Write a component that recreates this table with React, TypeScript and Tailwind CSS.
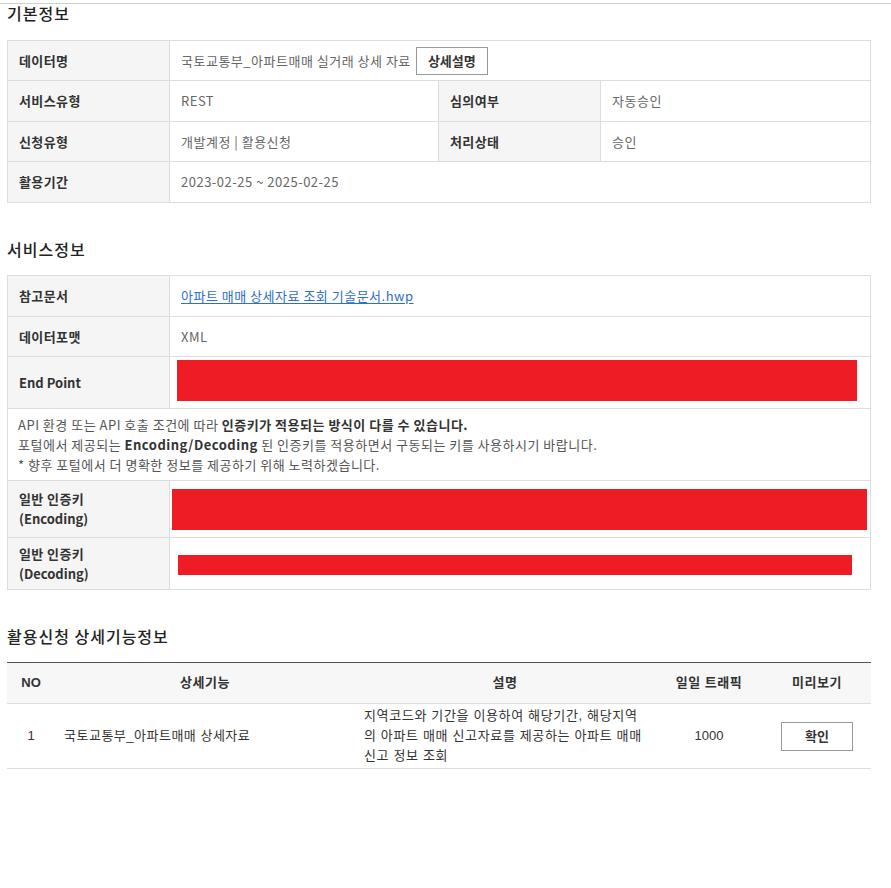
import React from "react";

const FONT = { fontFamily: '"Noto Sans CJK KR", "Noto Sans", sans-serif' };
const FONT3 = { fontFamily: '"Liberation Sans", "Noto Sans CJK KR", sans-serif' };

function Label({ children, w = "w-[162px]", extra = "" }: { children: React.ReactNode; w?: string; extra?: string }) {
  return (
    <div className={`${w} shrink-0 bg-[#f5f5f5] border-r border-[#ddd] flex items-center pl-[11px] text-[13px] font-bold text-[#333] leading-[20px] tracking-[0.4px] ${extra}`}>
      {children}
    </div>
  );
}

function Value({ children, w = "flex-1", extra = "" }: { children?: React.ReactNode; w?: string; extra?: string }) {
  return (
    <div className={`${w} flex items-center pl-[11px] text-[13px] text-[#666] tracking-[0.5px] ${extra}`}>{children}</div>
  );
}

function Title({ children, extra = "" }: { children: React.ReactNode; extra?: string }) {
  return (
    <div className={`pl-[7px] text-[16px] font-medium text-[#222] leading-[18px] tracking-[1px] ${extra}`}>{children}</div>
  );
}

export default function App() {
  return (
    <div className="w-[891px] h-[888px] bg-white" style={FONT}>
      <div className="h-[3px]" />
      <div className="h-px bg-[#cfcfcf]" />
      <Title>기본정보</Title>

      {/* Table 1 */}
      <div className="ml-[7px] mt-[18px] w-[864px] border border-[#ddd]">
        <div className="flex h-[40px] border-b border-[#ddd]">
          <Label>데이터명</Label>
          <Value>
            <span>국토교통부_아파트매매 실거래 상세 자료</span>
            <button className="ml-[5px] w-[72px] h-[28px] border border-[#999] bg-white text-[13px] font-bold text-[#333] tracking-normal">
              상세설명
            </button>
          </Value>
        </div>
        <div className="flex h-[41px] border-b border-[#ddd]">
          <Label>서비스유형</Label>
          <Value w="w-[269px] shrink-0 border-r border-[#ddd]">REST</Value>
          <Label>심의여부</Label>
          <Value>자동승인</Value>
        </div>
        <div className="flex h-[40px] border-b border-[#ddd]">
          <Label>신청유형</Label>
          <Value w="w-[269px] shrink-0 border-r border-[#ddd]">개발계정 | 활용신청</Value>
          <Label>처리상태</Label>
          <Value>승인</Value>
        </div>
        <div className="flex h-[40px]">
          <Label>활용기간</Label>
          <Value>2023-02-25 ~ 2025-02-25</Value>
        </div>
      </div>

      <Title extra="mt-[37px]">서비스정보</Title>

      {/* Table 2 */}
      <div className="ml-[7px] mt-[17px] w-[864px] border border-[#ddd]">
        <div className="flex h-[41px] border-b border-[#ddd]">
          <Label>참고문서</Label>
          <Value>
            <a className="text-[#2f6fc4] underline underline-offset-2" href="#">
              아파트 매매 상세자료 조회 기술문서.hwp
            </a>
          </Value>
        </div>
        <div className="flex h-[40px] border-b border-[#ddd]">
          <Label>데이터포맷</Label>
          <Value>XML</Value>
        </div>
        <div className="flex h-[52px] border-b border-[#ddd]">
          <Label extra="tracking-normal">End Point</Label>
          <div className="flex-1 pt-[3px] pl-[7px]">
            <div className="w-[680px] h-[41px] bg-[#ee1c25]" />
          </div>
        </div>
        <div className="h-[72px] border-b border-[#ddd] flex flex-col justify-center pl-[10px] text-[13px] leading-[20px] text-[#555] tracking-[0.5px]">
          <div>
            API 환경 또는 API 호출 조건에 따라 <b className="text-[#333]">인증키가 적용되는 방식이 다를 수 있습니다.</b>
          </div>
          <div>
            포털에서 제공되는 <b className="text-[#333]">Encoding/Decoding</b> 된 인증키를 적용하면서 구동되는 키를 사용하시기 바랍니다.
          </div>
          <div>* 향후 포털에서 더 명확한 정보를 제공하기 위해 노력하겠습니다.</div>
        </div>
        <div className="flex h-[57px] border-b border-[#ddd]">
          <Label>
            <div>
              <div>일반 인증키</div>
              <div className="tracking-normal">(Encoding)</div>
            </div>
          </Label>
          <div className="flex-1 pt-[8px] pl-[2px]">
            <div className="w-[695px] h-[41px] bg-[#ee1c25]" />
          </div>
        </div>
        <div className="flex h-[51px]">
          <Label>
            <div>
              <div>일반 인증키</div>
              <div className="tracking-normal">(Decoding)</div>
            </div>
          </Label>
          <div className="flex-1 pt-[17px] pl-[8px]">
            <div className="w-[674px] h-[20px] bg-[#ee1c25]" />
          </div>
        </div>
      </div>

      <Title extra="mt-[37px]">활용신청 상세기능정보</Title>

      {/* Table 3 */}
      <div className="ml-[7px] mt-[17px] w-[864px] border-t border-[#555] text-[13px] text-[#333]" style={FONT3}>
        <div className="flex h-[41px] bg-[#f7f7f7] border-b border-[#ddd] font-bold items-center text-center">
          <div className="w-[48px]">NO</div>
          <div className="w-[300px] tracking-[0.5px]">상세기능</div>
          <div className="w-[300px] tracking-[0.5px]">설명</div>
          <div className="w-[108px] tracking-[0.5px]">일일 트래픽</div>
          <div className="flex-1 tracking-[0.5px]">미리보기</div>
        </div>
        <div className="flex h-[65px] border-b border-[#ddd] items-center">
          <div className="w-[48px] text-center">1</div>
          <div className="w-[300px] px-[9px] tracking-[0.5px]">국토교통부_아파트매매 상세자료</div>
          <div className="w-[300px] pl-[9px] pr-[9px] leading-[20px] tracking-[0.65px]">
            지역코드와 기간을 이용하여 해당기간, 해당지역의 아파트 매매 신고자료를 제공하는 아파트 매매 신고 정보 조회
          </div>
          <div className="w-[108px] text-center">1000</div>
          <div className="flex-1 flex justify-center">
            <button className="w-[72px] h-[29px] border border-[#999] bg-white font-bold text-[13px] text-[#333]" style={FONT}>
              확인
            </button>
          </div>
        </div>
      </div>
    </div>
  );
}
